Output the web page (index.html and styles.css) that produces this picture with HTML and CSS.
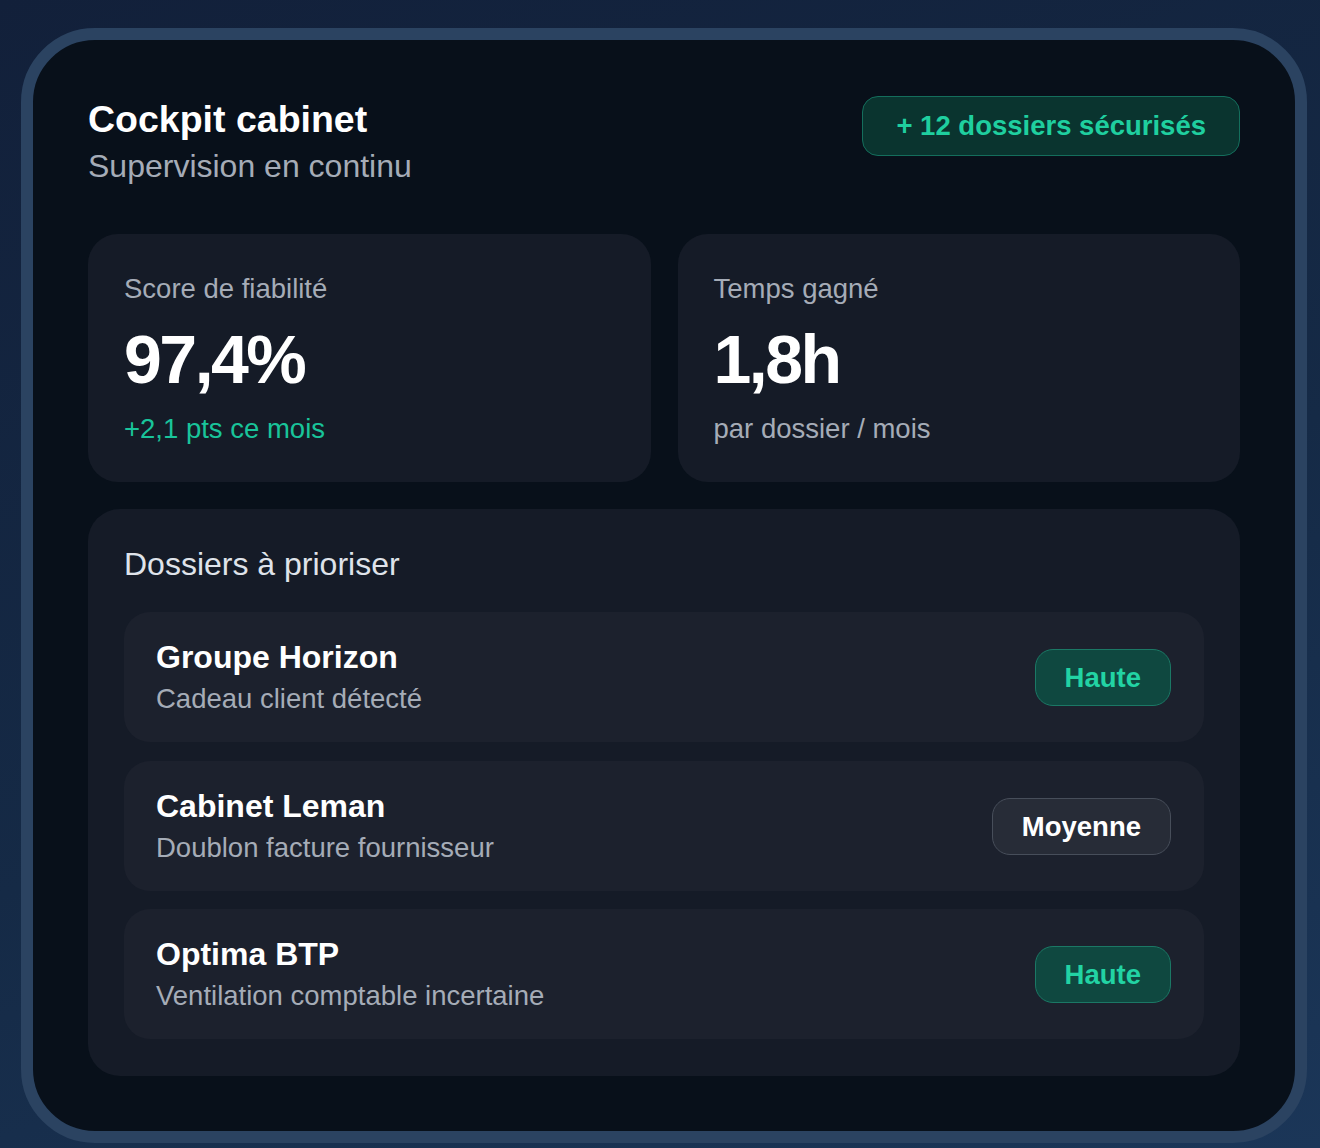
FILE: index.html
```html
<!DOCTYPE html>
<html lang="fr">
<head>
  <meta charset="UTF-8">
  <title>Cockpit cabinet</title>
  <link rel="stylesheet" href="styles.css">
</head>
<body>

  <div class="frame">
    <div class="cockpit">

      <div class="head">
        <div>
          <h1>Cockpit cabinet</h1>
          <p class="sub">Supervision en continu</p>
        </div>
        <span class="secured">+ 12 dossiers sécurisés</span>
      </div>

      <div class="stats">
        <div class="stat">
          <div class="stat-label">Score de fiabilité</div>
          <div class="stat-value">97,4%</div>
          <div class="stat-note up">+2,1 pts ce mois</div>
        </div>
        <div class="stat">
          <div class="stat-label">Temps gagné</div>
          <div class="stat-value">1,8h</div>
          <div class="stat-note">par dossier / mois</div>
        </div>
      </div>

      <div class="queue">
        <h2>Dossiers à prioriser</h2>

        <div class="item">
          <div>
            <div class="item-name">Groupe Horizon</div>
            <div class="item-desc">Cadeau client détecté</div>
          </div>
          <span class="prio high">Haute</span>
        </div>

        <div class="item">
          <div>
            <div class="item-name">Cabinet Leman</div>
            <div class="item-desc">Doublon facture fournisseur</div>
          </div>
          <span class="prio mid">Moyenne</span>
        </div>

        <div class="item">
          <div>
            <div class="item-name">Optima BTP</div>
            <div class="item-desc">Ventilation comptable incertaine</div>
          </div>
          <span class="prio high">Haute</span>
        </div>
      </div>

    </div>
  </div>

</body>
</html>
```

FILE: styles.css
```css
body {
  margin: 0;
  min-height: 100vh;
  font-family: "Liberation Sans", Arial, sans-serif;
  background: linear-gradient(160deg, #12203a 0%, #152a46 55%, #1b3658 100%);
  color: #fff;
}
.frame {
  padding: 28px 13px 5px 21px;
}
.cockpit {
  background: #08101a;
  border: 12px solid #2b4361;
  border-radius: 74px;
  padding: 55px;
}
.head {
  display: flex;
  justify-content: space-between;
  align-items: flex-start;
  margin-bottom: 49px;
}
h1 {
  margin: 0;
  font-size: 37.5px;
  line-height: 48px;
  font-weight: 700;
}
.sub {
  margin: 4px 0 0;
  font-size: 32px;
  line-height: 38px;
  color: #a5acb7;
}
.secured {
  margin-top: 1px;
  padding: 0 33px;
  height: 58px;
  line-height: 58px;
  border: 1px solid #146e5c;
  border-radius: 16px;
  background: #0a342f;
  color: #1fcf9f;
  font-size: 27.5px;
  font-weight: 700;
}
.stats {
  display: grid;
  grid-template-columns: 1fr 1fr;
  gap: 27px;
  margin-bottom: 27px;
}
.stat {
  background: #151b27;
  border-radius: 30px;
  padding: 39px 36px 37px;
}
.stat-label {
  font-size: 27.5px;
  line-height: 32px;
  color: #a5acb7;
}
.stat-value {
  margin-top: 16px;
  font-size: 68px;
  line-height: 76px;
  font-weight: 700;
  letter-spacing: -2.5px;
}
.stat-note {
  margin-top: 16px;
  font-size: 27.5px;
  line-height: 32px;
  color: #a5acb7;
}
.stat-note.up {
  color: #19c49a;
}
.queue {
  background: #151b27;
  border-radius: 32px;
  padding: 36px 36px 37px;
}
h2 {
  margin: 0 0 29px;
  font-size: 32px;
  line-height: 38px;
  font-weight: 400;
  color: #dfe3ea;
}
.item {
  display: flex;
  justify-content: space-between;
  align-items: center;
  background: #1c212d;
  border-radius: 26px;
  padding: 26px 33px 25px 32px;
  margin-top: 18.5px;
}
.item:first-of-type {
  margin-top: 0;
}
.item-name {
  font-size: 32px;
  line-height: 38px;
  font-weight: 700;
}
.item-desc {
  margin-top: 5px;
  font-size: 27.5px;
  line-height: 36px;
  color: #a5acb7;
}
.prio {
  height: 55px;
  line-height: 55px;
  padding: 0 29px;
  border-radius: 18px;
  font-size: 27.5px;
  font-weight: 700;
}
.prio.high {
  background: #0f4840;
  border: 1px solid #1b7865;
  color: #22d3a4;
}
.prio.mid {
  background: #272c37;
  border: 1px solid #474e5a;
  color: #fff;
}
```
